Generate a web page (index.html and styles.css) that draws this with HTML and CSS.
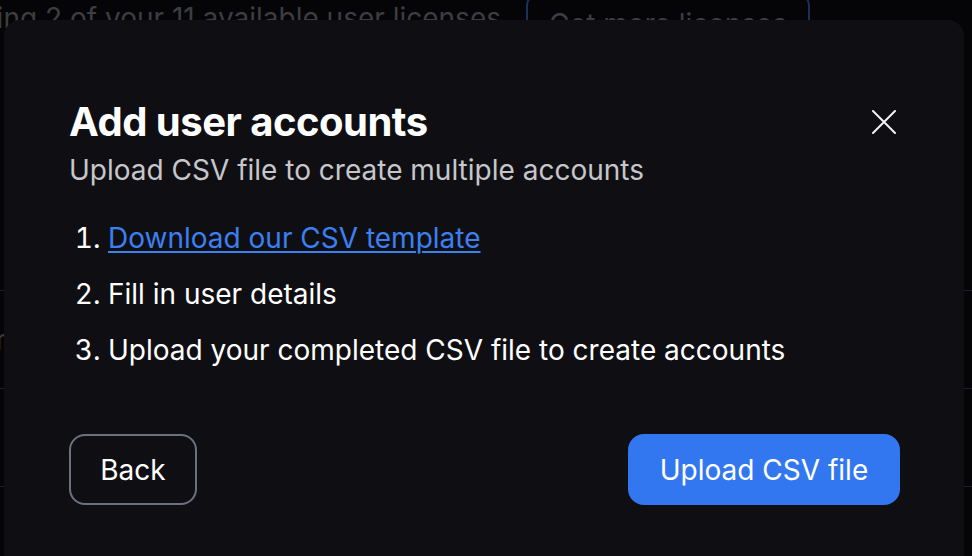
FILE: index.html
```html
<!DOCTYPE html>
<html>
<head>
<meta charset="utf-8">
<link rel="stylesheet" href="styles.css">
</head>
<body>
<div class="page">
  <div class="topbar">
    <span class="usage">Using 2 of your 11 available user licenses</span>
    <button class="more">Get more licenses</button>
  </div>
  <div class="table">
    <div class="row"><span class="cell-l">Name</span><span class="cell-r">t</span></div>
    <div class="row"><span class="cell-l"></span><span class="cell-r">t</span></div>
    <div class="row"></div>
  </div>
</div>
<div class="overlay">
  <div class="modal">
    <div class="head">
      <div>
        <h1 class="title">Add user accounts</h1>
        <p class="subtitle">Upload CSV file to create multiple accounts</p>
      </div>
      <button class="close" aria-label="Close">
        <svg width="24" height="24" viewBox="0 0 24 24"><path d="M1 1 L23 23 M23 1 L1 23" stroke="#f2f2f4" stroke-width="2" stroke-linecap="round" fill="none"/></svg>
      </button>
    </div>
    <ol class="steps">
      <li><a href="#">Download our CSV template</a></li>
      <li>Fill in user details</li>
      <li>Upload your completed CSV file to create accounts</li>
    </ol>
    <div class="actions">
      <button class="btn back">Back</button>
      <button class="btn primary">Upload CSV file</button>
    </div>
  </div>
</div>
</body>
</html>
```
FILE: styles.css
```css
* { box-sizing: border-box; }
html, body { margin: 0; padding: 0; }
body {
  width: 972px;
  height: 556px;
  overflow: hidden;
  background: #050507;
  font-family: Inter, "Noto Sans", sans-serif;
  position: relative;
}
.page {
  color: #3d3d42;
  font-size: 28px;
  height: 556px;
  overflow: hidden;
}
.topbar {
  display: flex;
  align-items: flex-start;
  gap: 25px;
  margin-left: -39px;
  height: 40px;
}
.usage { line-height: 40px; margin-top: -2px; white-space: nowrap; }
.more {
  font-family: inherit;
  font-size: 28px;
  color: #3d3d42;
  background: transparent;
  border: 2px solid #1b2f57;
  border-radius: 14px;
  height: 64px;
  width: 284px;
  margin-top: -8px;
  padding: 0;
  flex: none;
}
.table { margin-top: 250px; }
.row {
  height: 98px;
  border-top: 1px solid #1f1f23;
  display: flex;
  justify-content: space-between;
  align-items: center;
  margin-left: -50px;
  margin-right: -10px;
}
.cell-r, .cell-l { color: #3d3d42; }
.overlay {
  position: absolute;
  inset: 0;
  padding: 20px 8px 0 4px;
  display: flex;
  flex-direction: column;
}
.modal {
  flex: 1;
  background: #0f0f13;
  border-radius: 16px 16px 0 0;
  padding: 78px 64px 0 65px;
  color: #fff;
}
.head {
  display: flex;
  justify-content: space-between;
  align-items: flex-start;
}
.title {
  margin: 0;
  font-size: 40px;
  font-weight: 700;
  line-height: 48px;
  letter-spacing: -0.5px;
}
.subtitle {
  margin: 4px 0 0;
  font-size: 28px;
  line-height: 40px;
  color: #c6c6cb;
}
.close {
  background: none;
  border: 0;
  padding: 0;
  margin: 12px 4px 0 0;
  width: 24px;
  height: 24px;
  display: flex;
}
.steps {
  margin: 20px 0 0;
  padding-left: 39px;
  font-size: 28px;
  line-height: 56px;
}
.steps a { color: #3b80f2; text-decoration: underline; text-underline-offset: 3px; text-decoration-thickness: 2px; }
.actions {
  display: flex;
  justify-content: space-between;
  margin-top: 56px;
}
.btn {
  font-family: inherit;
  font-size: 28px;
  height: 71px;
  border-radius: 16px;
  color: #fff;
}
.back {
  width: 128px;
  background: transparent;
  border: 2px solid #6b7180;
}
.primary {
  width: 272px;
  background: #3377f0;
  border: 0;
}
```
